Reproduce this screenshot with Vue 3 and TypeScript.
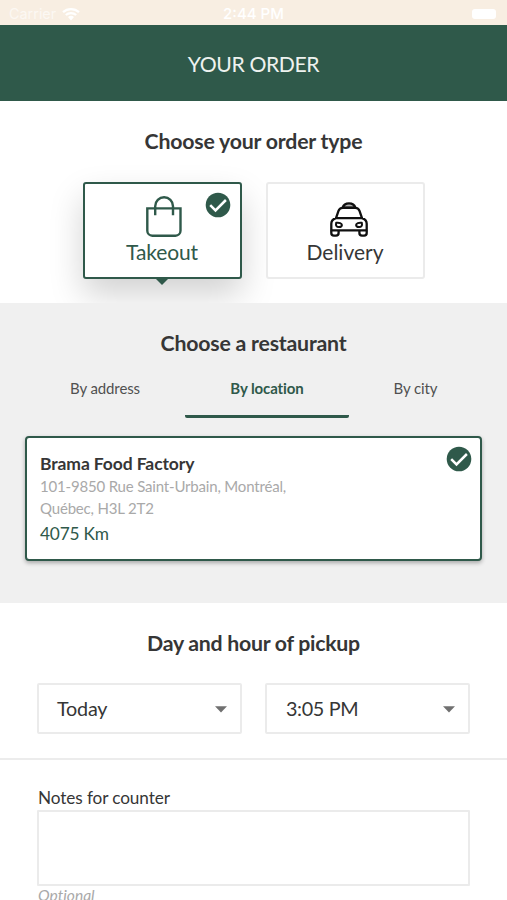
<script setup lang="ts">
import { ref } from 'vue'

type OrderType = 'takeout' | 'delivery'

const orderType = ref<OrderType>('takeout')
const tabs: string[] = ['By address', 'By location', 'By city']
const activeTab = ref('By location')
const notes = ref('')
const pickup: string[] = ['Today', '3:05 PM']
</script>

<template>
  <main class="screen">
    <div class="status">
      <div class="carrier">
        <span>Carrier</span>
        <svg class="wifi" viewBox="0 0 18 14">
          <path d="M1 5.2a12 12 0 0 1 16 0M3.8 8a8 8 0 0 1 10.4 0" fill="none" stroke="#fff" stroke-width="2.3" />
          <path d="M6 9.9a5 5 0 0 1 6 0L9 13.4z" fill="#fff" />
        </svg>
      </div>
      <span class="clock">2:44 PM</span>
      <div class="power"><span class="battery"></span></div>
    </div>

    <header class="bar">YOUR ORDER</header>

    <section class="types">
      <h2>Choose your order type</h2>
      <div class="cards">
        <button class="card" :class="{ selected: orderType === 'takeout' }" @click="orderType = 'takeout'">
          <svg class="bag" viewBox="0 0 36 42" fill="none" stroke="#2f594a" stroke-width="2.4">
            <path d="M1.3 12.4h33.2v22.3a5 5 0 0 1-5 5H6.3a5 5 0 0 1-5-5z" />
            <path d="M9.2 19.2v-9a8.9 8.9 0 0 1 17.8 0v9" />
          </svg>
          <span class="label">Takeout</span>
          <svg v-if="orderType === 'takeout'" class="check" viewBox="0 0 26 26">
            <circle cx="13" cy="13" r="12.3" fill="#2f594a" />
            <path d="M5.2 13.2l5.3 5.3L20.9 8" fill="none" stroke="#fff" stroke-width="2.5" />
          </svg>
        </button>
        <button class="card" :class="{ selected: orderType === 'delivery' }" @click="orderType = 'delivery'">
          <svg class="car" viewBox="0 0 38 35" fill="none" stroke="#101010" stroke-width="2.3" stroke-linejoin="round">
            <path d="M12.6 5.6c.8-2.5 3.2-4.3 6.4-4.3s5.6 1.800 6.400 4.300z" fill="#b5b5b5" />
            <path d="M6 16.200l2.500-7.300c.7-2.100 2-3.100 4.200-3.100h12.600c2.200 0 3.500 1 4.200 3.100l2.500 7.300" />
            <path d="M5 16.200h28M6 16.200c-3.200 1-4.700 2.800-4.700 5.600v6.600h35.400v-6.600c0-2.800-1.500-4.600-4.700-5.600" />
            <path d="M1.300 28.400v2.700a2.600 2.600 0 0 0 2.600 2.600H6a2.600 2.600 0 0 0 2.600-2.600v-2.700M29.400 28.400v2.700a2.600 2.600 0 0 0 2.600 2.600h2.100a2.600 2.600 0 0 0 2.600-2.600v-2.700" />
            <path d="M6.200 20.800c3-.5 5.700.6 5.700 2.200 0 1.300-1.200 2.100-3 2.100-2.300 0-3.400-1.500-2.700-4.300zM31.800 20.800c-3-.5-5.700.6-5.700 2.200 0 1.300 1.200 2.100 3 2.100 2.300 0 3.400-1.500 2.700-4.300z" stroke-width="2" />
          </svg>
          <span class="label">Delivery</span>
        </button>
      </div>
    </section>

    <section class="restaurants">
      <h2>Choose a restaurant</h2>
      <nav class="tabs">
        <button v-for="tab in tabs" :key="tab" class="tab" :class="{ active: tab === activeTab }" @click="activeTab = tab">{{ tab }}</button>
      </nav>
      <article class="place">
        <div>
          <h3>Brama Food Factory</h3>
          <p class="address">101-9850 Rue Saint-Urbain, Montréal, Québec, H3L 2T2</p>
          <p class="distance">4075 Km</p>
        </div>
        <svg class="check" viewBox="0 0 26 26">
          <circle cx="13" cy="13" r="12.3" fill="#2f594a" />
          <path d="M5.2 13.2l5.3 5.3L20.9 8" fill="none" stroke="#fff" stroke-width="2.5" />
        </svg>
      </article>
    </section>

    <section class="schedule">
      <h2>Day and hour of pickup</h2>
      <div class="selects">
        <button v-for="value in pickup" :key="value" class="select">
          <span>{{ value }}</span>
          <svg class="arrow" viewBox="0 0 12 7"><path d="M0 .3h12L6 6.5z" fill="#707070" /></svg>
        </button>
      </div>
    </section>

    <section class="notes">
      <label for="notes">Notes for counter</label>
      <textarea id="notes" v-model="notes"></textarea>
      <em>Optional</em>
    </section>
  </main>
</template>

<style>
body {
  overflow: hidden;
}
</style>

<style scoped>
.screen {
  box-sizing: border-box;
  height: 900px;
  overflow: hidden;
  background: #fff;
  color: #363636;
  font-family: Lato, sans-serif;
  font-variant-ligatures: none;
}
.screen * {
  box-sizing: border-box;
}
button {
  margin: 0;
  padding: 0;
  border: 0;
  background: none;
  color: inherit;
  font-family: inherit;
}
h2, h3, p {
  margin: 0;
}
h2 {
  font-size: 21.3px;
  line-height: 26px;
  font-weight: 700;
  letter-spacing: -0.21px;
  text-align: center;
}
.status {
  display: grid;
  grid-template-columns: 1fr auto 1fr;
  align-items: center;
  height: 25px;
  padding: 2px 11px 0 9px;
  background: #f8eee2;
  color: #fff;
  font: 16px/20px Inter, sans-serif;
}
.carrier {
  display: flex;
  align-items: center;
  gap: 6px;
  font-size: 14.4px;
}
.carrier span {
  opacity: 0.6;
}
.wifi {
  width: 18px;
  height: 14px;
}
.clock {
  padding-left: 2px;
  font-weight: 500;
  font-size: 15px;
}
.power {
  display: flex;
  justify-content: flex-end;
}
.battery {
  width: 24px;
  height: 10px;
  border-radius: 3px;
  background: #fff;
}
.bar {
  height: 76px;
  padding-top: 1px;
  background: #2f594a;
  color: #eef2ef;
  font-size: 21.2px;
  line-height: 76px;
  letter-spacing: -0.4px;
  text-align: center;
}
.types {
  height: 202px;
  padding-top: 27px;
}
.cards {
  display: flex;
  justify-content: center;
  gap: 24px;
  margin-top: 28px;
}
.card {
  position: relative;
  display: flex;
  flex-direction: column;
  align-items: center;
  justify-content: flex-end;
  width: 159px;
  height: 97px;
  padding-bottom: 11px;
  border: 2px solid #ebebeb;
  border-radius: 3px;
  background: #fff;
  font-size: 21px;
}
.card.selected {
  border-color: #2f594a;
  color: #2f594a;
  box-shadow: 0 16px 34px rgba(0, 0, 0, 0.18);
}
.card.selected .label {
  letter-spacing: -0.1px;
}
.card.selected::after {
  content: '';
  position: absolute;
  top: 94px;
  left: 70px;
  border: solid transparent;
  border-width: 7px 7px 0;
  border-top-color: #2f594a;
}
.label {
  line-height: 28px;
}
.bag {
  width: 36px;
  height: 42px;
  margin-left: 3px;
}
.car {
  width: 38px;
  height: 35px;
  margin: 0 0 1px 7px;
}
.check {
  width: 26px;
  height: 26px;
}
.card .check {
  position: absolute;
  top: 8px;
  right: 9px;
}
.restaurants {
  position: relative;
  height: 300px;
  padding: 27px 25px 0;
  background: #f0f0f0;
}
.tabs {
  display: grid;
  grid-template-columns: 160px 164px 133px;
  margin-top: 11px;
}
.tab {
  height: 51px;
  padding-bottom: 7px;
  border-bottom: 3px solid transparent;
  color: #505050;
  font-size: 15px;
  letter-spacing: -0.1px;
}
.tab.active {
  border-color: #2f594a;
  border-radius: 2px;
  color: #2f594a;
  font-weight: 700;
}
.place {
  display: flex;
  justify-content: space-between;
  height: 125px;
  margin-top: 18px;
  padding: 8px 8px 0 13px;
  border: 2.5px solid #2f594a;
  border-radius: 4px;
  background: #fff;
  box-shadow: 0 2px 4px rgba(0, 0, 0, 0.3);
}
.place h3 {
  padding-top: 6px;
  font-size: 17.5px;
  line-height: 24px;
  letter-spacing: -0.1px;
}
.address {
  width: 270px;
  margin: -1px 0 1px;
  color: #a9a9a9;
  font-size: 15px;
  line-height: 22px;
  letter-spacing: -0.18px;
}
.distance {
  color: #2f594a;
  font-size: 17.3px;
  line-height: 27px;
  letter-spacing: -0.2px;
}
.schedule {
  height: 157px;
  padding: 27px 37px 0;
  border-bottom: 2px solid #ececec;
}
.schedule h2 {
  letter-spacing: -0.28px;
}
.selects {
  display: grid;
  grid-template-columns: 1fr 1fr;
  gap: 23px;
  margin-top: 27px;
}
.select {
  display: flex;
  align-items: center;
  justify-content: space-between;
  height: 51px;
  padding: 0 13px 2px 18px;
  border: 2px solid #ebebeb;
  border-radius: 2px;
  font-size: 19.8px;
  letter-spacing: -0.2px;
}
.select:last-child {
  padding-left: 19px;
  letter-spacing: -0.35px;
}
.arrow {
  width: 12px;
  height: 7px;
  margin-top: 4px;
}
.notes {
  display: flex;
  flex-direction: column;
  padding: 26px 37px 0;
}
.notes label {
  padding-left: 1px;
  font-size: 17.2px;
  line-height: 24px;
  letter-spacing: -0.1px;
}
textarea {
  height: 76px;
  border: 2px solid #ebebeb;
  border-radius: 1px;
  resize: none;
  outline: none;
}
.notes em {
  padding-left: 1px;
  color: #a9a9a9;
  font-size: 15.6px;
  line-height: 19px;
}
</style>
